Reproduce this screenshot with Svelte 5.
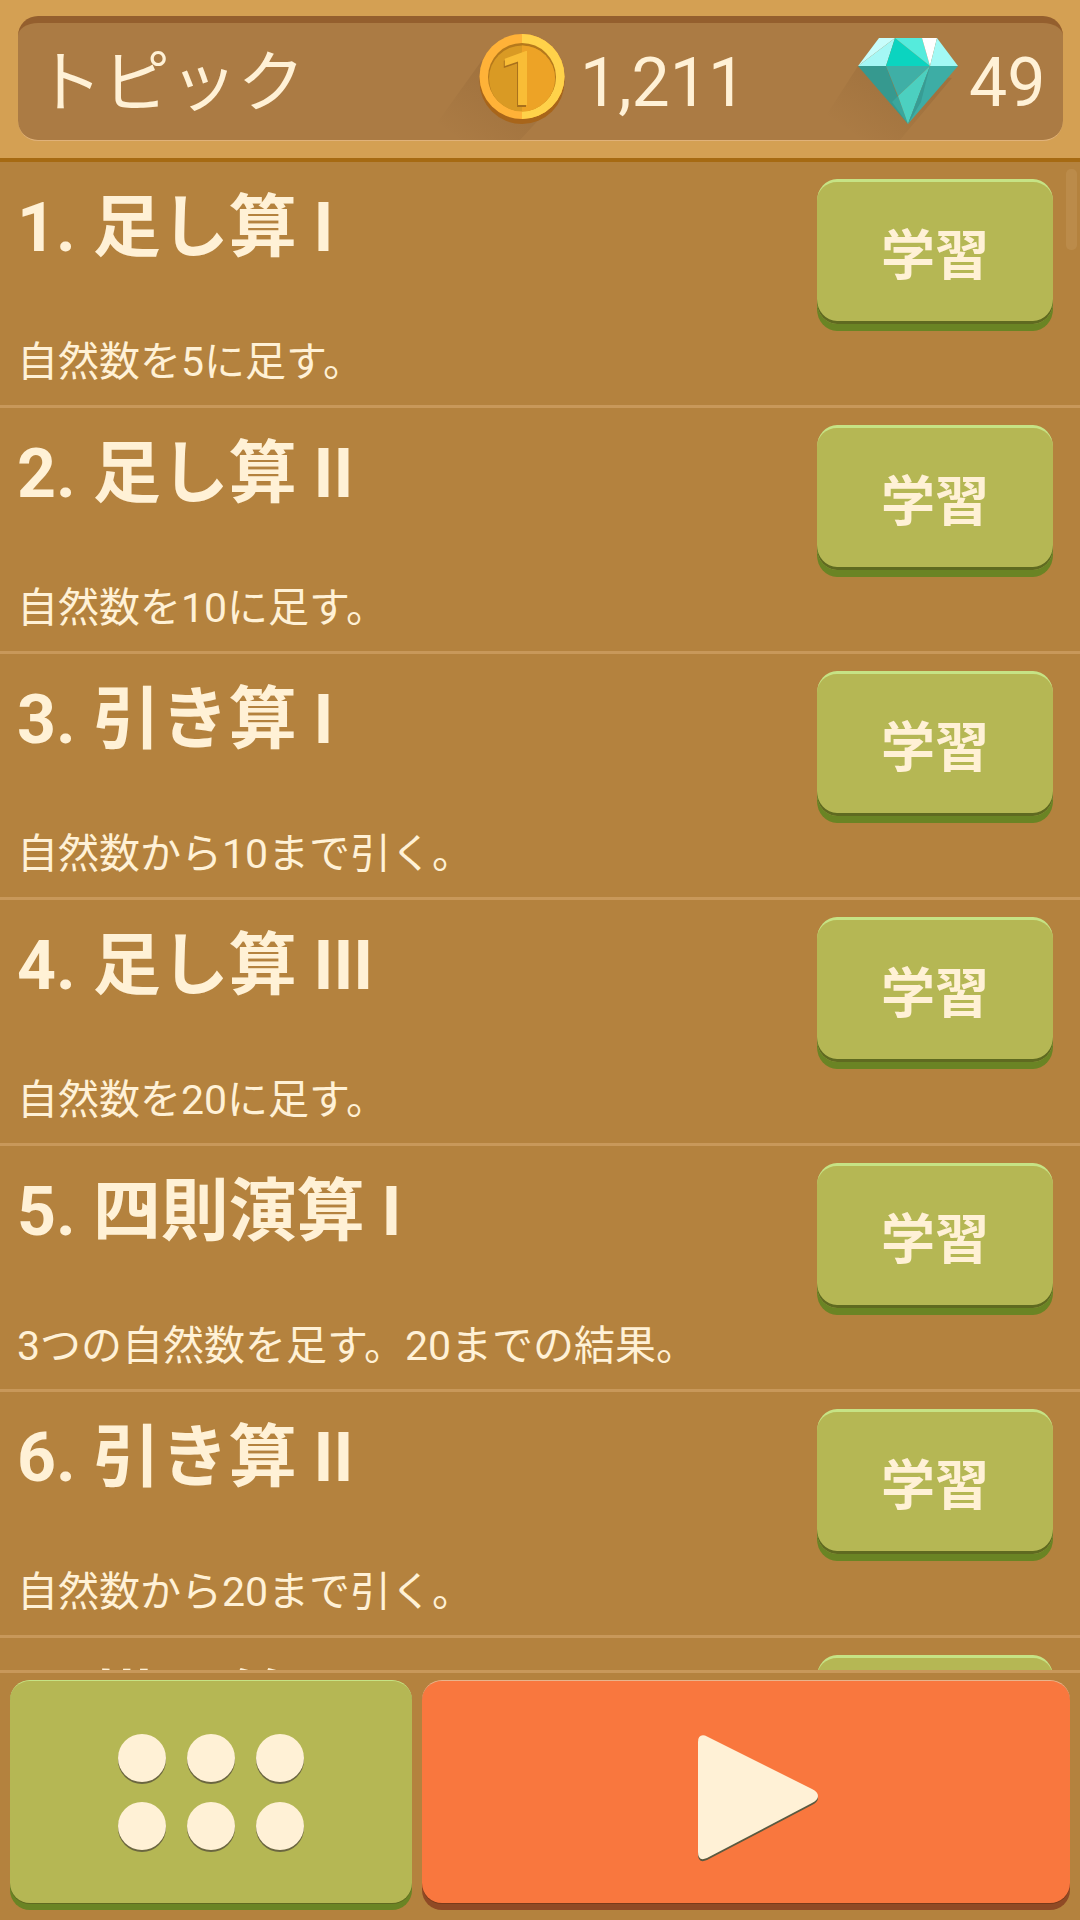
<script>
    const topics = [
        { title: "1. 足し算 I", desc: "自然数を5に足す。" },
        { title: "2. 足し算 II", desc: "自然数を10に足す。" },
        { title: "3. 引き算 I", desc: "自然数から10まで引く。" },
        { title: "4. 足し算 III", desc: "自然数を20に足す。" },
        { title: "5. 四則演算 I", desc: "3つの自然数を足す。20までの結果。" },
        { title: "6. 引き算 II", desc: "自然数から20まで引く。" },
        { title: "7. 掛け算 I", desc: "" }
    ];
</script>

<div class="screen">
    <header class="header">
        <div class="panel">
            <h1 class="heading">トピック</h1>
            <div class="coins">
                <svg class="coin" width="86" height="92" viewBox="0 0 86 92">
                    <defs>
                        <linearGradient id="coin-shade" gradientUnits="userSpaceOnUse" x1="43" y1="42" x2="-10" y2="115">
                            <stop offset="0" stop-color="#3c1e08" stop-opacity="0.11" />
                            <stop offset="1" stop-color="#3c1e08" stop-opacity="0" />
                        </linearGradient>
                    </defs>
                    <polygon fill="url(#coin-shade)" points="6,22 -50,100 0,150 80,64" />
                    <circle cx="43" cy="47.5" r="42.5" fill="#a8651a" />
                    <circle cx="43" cy="42.5" r="42.5" fill="#ffb238" />
                    <path d="M43 0a42.5 42.5 0 0 1 0 85z" fill="#ffd24a" />
                    <circle cx="43" cy="43" r="34" fill="#b5791c" />
                    <circle cx="43" cy="44.5" r="33" fill="#d99a24" />
                    <path d="M43 11.500a33 33 0 0 1 0 66z" fill="#eda326" />
                    <text x="40" y="73" class="coin-digit back">1</text>
                    <text x="41" y="71" class="coin-digit">1</text>
                </svg>
                <span class="amount">1,211</span>
            </div>
            <div class="gems">
                <svg class="gem" width="100" height="86" viewBox="0 0 100 86">
                    <defs>
                        <linearGradient id="gem-shade" gradientUnits="userSpaceOnUse" x1="50" y1="40" x2="5" y2="105">
                            <stop offset="0" stop-color="#3c1e08" stop-opacity="0.1" />
                            <stop offset="1" stop-color="#3c1e08" stop-opacity="0" />
                        </linearGradient>
                    </defs>
                    <polygon fill="url(#gem-shade)" points="0,28 -40,90 10,140 94,40" />
                    <polygon points="21,0 37,0 0,28" fill="#c8fdfb" />
                    <polygon points="37,0 28,28 0,28" fill="#a5f7f5" />
                    <polygon points="37,0 72,28 28,28" fill="#0bd4c0" />
                    <polygon points="37,0 64,0 72,28" fill="#55ebdc" />
                    <polygon points="64,0 79,0 72,28" fill="#ffffff" />
                    <polygon points="79,0 100,28 72,28" fill="#a2f9f5" />
                    <polygon points="0,28 28,28 50,86" fill="#36998f" />
                    <polygon points="28,28 72,28 40,58" fill="#3fafa6" />
                    <polygon points="40,58 34,64 50,86" fill="#3aa69c" />
                    <polygon points="72,28 40,58 50,86" fill="#4cd0c0" />
                    <polygon points="72,28 100,28 50,86" fill="#3dada5" />
                    <polygon points="72,28 63,64 50,86" fill="#379c94" />
                </svg>
                <span class="amount">49</span>
            </div>
        </div>
    </header>

    <main class="list">
        {#each topics as topic}
            <section class="row">
                <div class="text">
                    <h2 class="title">{topic.title}</h2>
                    <p class="desc">{topic.desc}</p>
                </div>
                <button class="learn">学習</button>
            </section>
        {/each}
        <div class="scrollbar"></div>
    </main>

    <footer class="footer">
        <button class="big green" aria-label="menu">
            <span class="dots">
                {#each Array(6) as _}
                    <span class="dot"></span>
                {/each}
            </span>
        </button>
        <button class="big orange" aria-label="play">
            <svg class="play" width="124" height="130" viewBox="0 0 124 130">
                <path d="M2 8Q2 0 9 1.500L116 55Q122 58 122 62Q122 66 116 69L11 124Q2 128 2 118Z" fill="#5b5a40" transform="translate(0 2)" />
                <path d="M2 8Q2 0 9 1.500L116 55Q122 58 122 62Q122 66 116 69L11 124Q2 128 2 118Z" fill="#fff1d6" />
            </svg>
        </button>
    </footer>
</div>

<style>
    :global(body) {
        background: #b4823e;
    }

    .screen {
        width: 1080px;
        height: 1920px;
        display: flex;
        flex-direction: column;
        overflow: hidden;
        background: #b4823e;
        color: #fff1d6;
        font-family: Roboto, "Noto Sans CJK JP", sans-serif;
    }

    .header {
        flex: none;
        box-sizing: border-box;
        height: 162px;
        padding: 16px 17px 0 18px;
        background: #d4a053;
        border-bottom: 4px solid #a66a12;
    }

    .panel {
        box-sizing: border-box;
        height: 125px;
        display: flex;
        align-items: center;
        padding: 3px 0 0 17px;
        overflow: hidden;
        border-radius: 20px;
        background: #ab7b44;
        border-top: 7px solid #945f2e;
        border-bottom: 1px solid #e0b27a;
    }

    .heading {
        width: 444px;
        margin: 0;
        font-size: 67.500px;
        font-weight: 400;
        line-height: 1;
    }

    .coins {
        width: 379px;
        display: flex;
        align-items: center;
        gap: 15px;
    }

    .gems {
        display: flex;
        align-items: center;
        gap: 11px;
    }

    .coin, .gem {
        flex: none;
        overflow: visible;
    }

    .coin {
        margin-bottom: 6px;
    }

    .gem {
        margin-bottom: 4px;
    }

    .coin-digit {
        font-family: Roboto, sans-serif;
        font-size: 76px;
        font-weight: 500;
        text-anchor: middle;
        fill: #f9bd36;
    }

    .coin-digit.back {
        fill: #a8701c;
    }

    .amount {
        font-size: 68px;
        line-height: 1;
    }

    .list {
        position: relative;
        flex: 1;
        min-height: 0;
        overflow: hidden;
    }

    .row {
        box-sizing: border-box;
        height: 246px;
        display: flex;
        justify-content: space-between;
        padding: 17px 27px 0 17px;
        border-bottom: 3px solid #c8985a;
    }

    .text {
        display: flex;
        flex-direction: column;
    }

    .title {
        margin: 9px 0 0;
        font-size: 68px;
        font-weight: 700;
        line-height: 80px;
    }

    .desc {
        margin: 69px 0 0;
        font-size: 41px;
        line-height: 50px;
    }

    .learn {
        flex: none;
        box-sizing: border-box;
        width: 236px;
        height: 145px;
        padding: 0 0 4px;
        border: none;
        border-top: 3px solid #c6e385;
        border-radius: 20px / 22px;
        background: #b5b754;
        box-shadow: inset 0 -3px 0 #5f6a20, 0 7px 0 #6a8424;
        color: #fff1d6;
        font-family: inherit;
        font-size: 54px;
        font-weight: 700;
    }

    .scrollbar {
        position: absolute;
        top: 7px;
        right: 3px;
        width: 11px;
        height: 81px;
        border-radius: 5px;
        background: rgba(255, 230, 190, 0.1);
    }

    .footer {
        flex: none;
        box-sizing: border-box;
        height: 250px;
        display: flex;
        gap: 10px;
        padding: 7px 10px 0;
        border-top: 3px solid #c8985a;
        background: #b4823e;
    }

    .big {
        box-sizing: border-box;
        height: 223px;
        display: flex;
        align-items: center;
        justify-content: center;
        padding: 0;
        border: none;
        border-top: 1px solid;
        border-radius: 20px;
    }

    .green {
        width: 402px;
        background: #b5b754;
        border-color: #c6e385;
        box-shadow: 0 1px 0 #5f6a20, 0 7px 0 #6a8424;
    }

    .orange {
        flex: 1;
        background: #f9773e;
        border-color: #e9b48c;
        box-shadow: 0 1px 0 #7a3a1a, 0 7px 0 #8f4a25;
    }

    .dots {
        display: grid;
        grid-template-columns: repeat(3, 48px);
        gap: 20px 21px;
    }

    .dot {
        width: 48px;
        height: 48px;
        border-radius: 50%;
        background: #fff1d6;
        box-shadow: 0 2px 0 #6b6640;
    }

    .play {
        margin: 13px 0 0 24px;
    }
</style>
